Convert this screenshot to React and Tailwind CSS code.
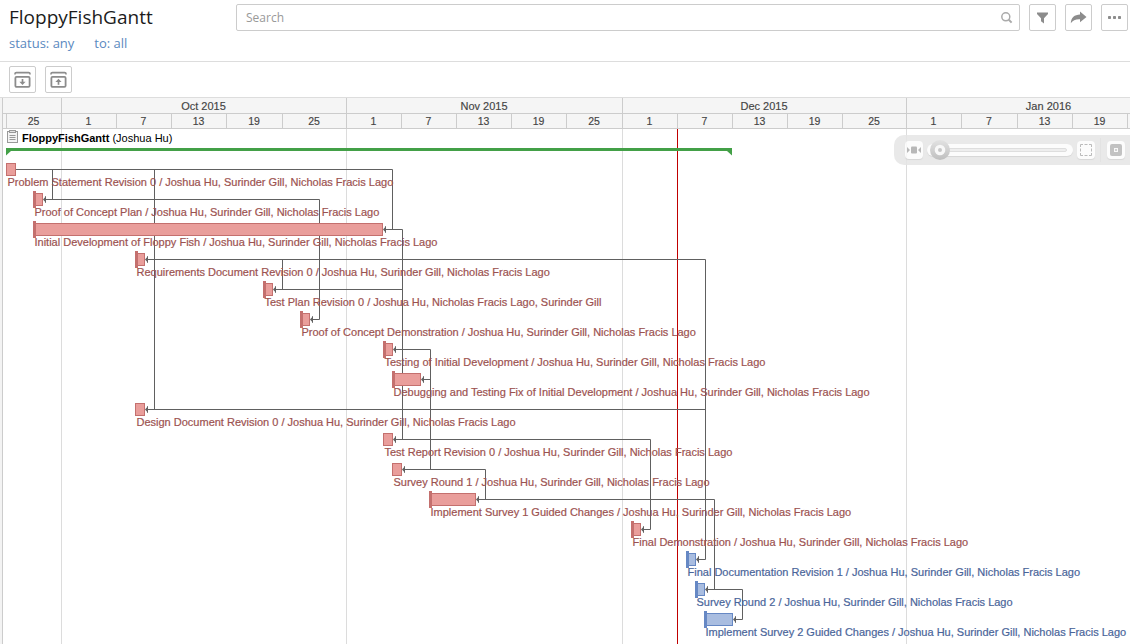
import React from "react";

const NAMES = "Joshua Hu, Surinder Gill, Nicholas Fracis Lago";

const TASKS = [
  { x: 6, w: 10, name: "Problem Statement Revision 0" },
  { x: 33, w: 10, tick: true, name: "Proof of Concept Plan" },
  { x: 33, w: 350, tick: true, name: "Initial Development of Floppy Fish" },
  { x: 135, w: 10, tick: true, name: "Requirements Document Revision 0" },
  { x: 263, w: 10, tick: true, name: "Test Plan Revision 0", people: "Joshua Hu, Nicholas Fracis Lago, Surinder Gill" },
  { x: 300, w: 10, tick: true, name: "Proof of Concept Demonstration" },
  { x: 383, w: 10, tick: true, name: "Testing of Initial Development" },
  { x: 392, w: 29, tick: true, name: "Debugging and Testing Fix of Initial Development" },
  { x: 135, w: 10, name: "Design Document Revision 0" },
  { x: 383, w: 10, name: "Test Report Revision 0" },
  { x: 392, w: 10, name: "Survey Round 1" },
  { x: 429, w: 47, tick: true, name: "Implement Survey 1 Guided Changes" },
  { x: 631, w: 10, tick: true, name: "Final Demonstration" },
  { x: 686, w: 10, tick: true, blue: true, name: "Final Documentation Revision 1" },
  { x: 695, w: 10, tick: true, blue: true, name: "Survey Round 2" },
  { x: 704, w: 29, tick: true, blue: true, name: "Implement Survey 2 Guided Changes" },
];

const MONTHS = [
  { w: 59, t: "" },
  { w: 285, t: "Oct 2015" },
  { w: 276, t: "Nov 2015" },
  { w: 284, t: "Dec 2015" },
  { w: 285, t: "Jan 2016" },
];

const DAYS = [
  [4, ""], [55, "25"], [55, "1"], [55, "7"], [55, "13"], [56, "19"], [64, "25"],
  [55, "1"], [55, "7"], [55, "13"], [55, "19"], [56, "25"],
  [55, "1"], [55, "7"], [55, "13"], [55, "19"], [64, "25"],
  [55, "1"], [56, "7"], [55, "13"], [55, "19"], [55, ""],
];

// Dependency lines, in page-wide coordinates
const LINKS = [
  "M16 169.5H392.5V229.5",
  "M386 229.5H402.5V439.5",
  "M52.5 169.5V199.5",
  "M45 199.5H319.5V319.5H312",
  "M154.5 169.5V409.5",
  "M147 409.5H705.5",
  "M147 259.5H705.5V559.5H698",
  "M282.5 259.5V289.5",
  "M275 289.5H402.5",
  "M395 439.5H650.5V529.5H643",
  "M395 349.5H430.5V469.5",
  "M423 379.5H430.5",
  "M404 469.5H485.5V499.5",
  "M478 499.5H714.5V589.5",
  "M707 589.5H742.5V619.5H735",
];

function ToolButton({ children }) {
  return (
    <button className="flex h-[27px] w-[27px] shrink-0 items-center justify-center rounded-[2px] border border-[#cccccc] bg-white">
      {children}
    </button>
  );
}

function BoxIcon({ up }) {
  return (
    <svg width="17" height="17" viewBox="0 0 17 17" fill="none" stroke="#8c8c8c">
      <path d="M1 3.4V2.8Q1 1.6 2.4 1.6H14.6Q16 1.6 16 2.8V3.4" strokeWidth="1.6" />
      <rect x="1.4" y="5.9" width="14.2" height="10" rx="1.2" strokeWidth="1.8" />
      {up ? (
        <path d="M5.4 11L8.5 7.8L11.6 11Z" stroke="none" fill="#8c8c8c" />
      ) : (
        <path d="M5.4 10.8L8.5 14L11.6 10.8Z" stroke="none" fill="#8c8c8c" />
      )}
      <path d={up ? "M8.5 10.5V13.8" : "M8.5 8V11"} strokeWidth="1.7" />
    </svg>
  );
}

function Header() {
  return (
    <header className="flex h-[62px] shrink-0 border-b border-[#dddddd]">
      <div className="w-[236px] shrink-0 pl-[9px] pt-[5px]">
        <h1 className="text-[19px] leading-[25px] text-[#1c1c1c]">FloppyFishGantt</h1>
        <div className="flex gap-[20px] pt-[4px] text-[13px] leading-[18px] text-[#5a89c0]">
          <a>status: any</a>
          <a>to: all</a>
        </div>
      </div>
      <div className="flex w-[892px] shrink-0 items-start pt-[4px]">
        <div className="mr-[9px] flex h-[27px] flex-1 items-center justify-between rounded-[2px] border border-[#cccccc] pl-[9px] pr-[6px]">
          <span className="text-[12px] text-[#999999]">Search</span>
          <svg width="13" height="13" viewBox="0 0 13 13" fill="none" stroke="#aaaaaa">
            <circle cx="5.8" cy="5.8" r="4" strokeWidth="1.5" />
            <path d="M8.8 8.8L11.6 11.6" strokeWidth="2" />
          </svg>
        </div>
        <div className="flex gap-[9px]">
          <ToolButton>
            <svg width="13" height="12" viewBox="0 0 13 12" fill="#8c8c8c">
              <path d="M1 0.5H12V2L8 6.3V11.5L5 9.3V6.3L1 2Z" />
            </svg>
          </ToolButton>
          <ToolButton>
            <svg width="17" height="13" viewBox="0 0 17 13" fill="#8c8c8c">
              <path d="M0.8 12.3C1 6.6 4.6 3.5 10 3.4V0.6L16.5 6L10 11.2V8.2C5.7 8 2.8 9.2 0.8 12.3Z" />
            </svg>
          </ToolButton>
          <ToolButton>
            <svg width="13" height="4" viewBox="0 0 13 4" fill="#8c8c8c">
              <rect x="0" y="0" width="3" height="3" rx=".7" />
              <rect x="5" y="0" width="3" height="3" rx=".7" />
              <rect x="10" y="0" width="3" height="3" rx=".7" />
            </svg>
          </ToolButton>
        </div>
      </div>
    </header>
  );
}

function TimeScale() {
  return (
    <div className="ml-[2px] w-[1128px] overflow-hidden border-l border-[#cccccc] bg-[#f5f5f5] text-[#444444] [-webkit-text-stroke:0.15px]">
      <div className="flex h-[16px] border-b border-[#cccccc]">
        {MONTHS.map((m, i) => (
          <div
            key={i}
            className="shrink-0 border-r border-[#cccccc] pr-px text-center text-[11px] leading-[17px]"
            style={{ width: m.w }}
          >
            {m.t}
          </div>
        ))}
      </div>
      <div className="flex h-[15px] border-b border-[#cccccc]">
        {DAYS.map(([w, t], i) => (
          <div
            key={i}
            className="shrink-0 border-r border-[#cccccc] pr-px text-center text-[10.5px] leading-[15px]"
            style={{ width: w }}
          >
            {t}
          </div>
        ))}
      </div>
    </div>
  );
}

function TaskRow({ task }) {
  const { x, w, tick, blue, name, people = NAMES } = task;
  return (
    <div className="h-[30px] pt-[2px]" style={{ paddingLeft: x }}>
      <div className="flex h-[17px] items-center" style={{ width: w }}>
        {tick && <div className={`h-[17px] w-[3px] shrink-0 ${blue ? "bg-[#6688c4]" : "bg-[#c4706e]"}`} />}
        <div
          className={`h-[13px] flex-1 border ${tick ? "border-l-0" : ""} ${
            blue ? "border-[#6688c4] bg-[#a9bde0]" : "border-[#c4706e] bg-[#e99e9b]"
          }`}
        />
      </div>
      <div
        className={`-mt-[3px] ml-[1.5px] whitespace-nowrap text-[11px] leading-[14px] [-webkit-text-stroke:0.2px] ${
          blue ? "text-[#4a659a]" : "text-[#9c5250]"
        }`}
      >
        {name} / {people}
      </div>
    </div>
  );
}

function ZoomBar() {
  const btn = "flex h-[18px] w-[18px] shrink-0 items-center justify-center rounded-[4px] bg-[#fcfcfc] shadow-[0_1px_1px_#d0d0d0]";
  return (
    <div className="absolute right-0 top-[6px] flex h-[30px] w-[236px] items-center rounded-l-[10px] bg-[#e6e6e6] pl-[11px] opacity-85">
      <div className={btn}>
        <svg width="16" height="8" viewBox="0 0 16 8" fill="#acacac">
          <path d="M1 1L4 4L1 7ZM15 1L12 4L15 7Z" />
          <rect x="5" y="0.5" width="6" height="7" rx="1" />
        </svg>
      </div>
      <div className="ml-[4px] flex h-[12px] w-[146px] items-center rounded-full bg-[#fcfcfc] px-[6px] shadow-[0_1px_1px_#d0d0d0]">
        <div className="h-[4px] flex-1 rounded-full border border-[#d9d9d9] bg-[#ececec]" />
      </div>
      <svg className="absolute left-[35px] top-[4px]" width="22" height="22" viewBox="0 0 22 22">
        <defs>
          <linearGradient id="knob" x1="0" y1="0" x2="0" y2="1">
            <stop offset="0" stopColor="#dedede" />
            <stop offset="1" stopColor="#b4b4b4" />
          </linearGradient>
        </defs>
        <circle cx="11" cy="11" r="10" fill="url(#knob)" />
        <circle cx="11" cy="11" r="5.3" fill="#f7f7f7" />
        <circle cx="11" cy="11" r="2" fill="#bebebe" />
      </svg>
      <div className={`${btn} ml-[4px]`}>
        <svg width="12" height="12" viewBox="0 0 12 12" fill="none" stroke="#b0b0b0">
          <path d="M0.5 3V0.5H3M9 0.5H11.5V3M11.5 9V11.5H9M3 11.5H0.5V9M4.5 0.5H7.5M4.5 11.5H7.5M0.5 4.5V7.5M11.5 4.5V7.5" />
        </svg>
      </div>
      <div className="ml-[5px] mr-[6px] h-[24px] w-px bg-[#dfdfdf]" />
      <div className={btn}>
        <svg width="12" height="12" viewBox="0 0 12 12">
          <rect width="12" height="12" rx="2" fill="#b8b8b8" />
          <rect x="4.5" y="4.5" width="3" height="3" fill="#c8c8c8" stroke="#f7f7f7" />
        </svg>
      </div>
    </div>
  );
}

export default function App() {
  return (
    <div className="flex h-[644px] w-[1130px] flex-col overflow-hidden bg-white font-['Open_Sans',sans-serif]">
      <Header />
      <div className="flex h-[35px] shrink-0 gap-[9px] pl-[9px] pt-[4px]">
        <ToolButton><BoxIcon /></ToolButton>
        <ToolButton><BoxIcon up /></ToolButton>
      </div>
      <div className="flex flex-1 flex-col overflow-hidden border-t border-[#dddddd] bg-[#f3f3f3] font-['Liberation_Sans',sans-serif]">
        <TimeScale />
        <div className="relative flex-1">
          <div className="absolute inset-y-0 left-[2px] right-0 border-l border-[#cccccc] bg-white" />
          <svg className="absolute left-0 top-0" width="1130" height="515" viewBox="0 129 1130 515" fill="none">
            <path d="M61.5 129V644M346.5 129V644M622.5 129V644M906.5 129V644" stroke="#dcdcdc" />
            <path d="M677.5 129V644" stroke="#c00000" />
            <path d={LINKS.join("")} stroke="#606060" />
            {TASKS.map((t, i) =>
              i === 0 ? null : (
                <g key={i} transform={`translate(${t.x + t.w} ${169 + 30 * i})`}>
                  <path d="M2.5 -3V4" stroke="#909090" />
                  <path d="M0 0.5L3 -2.8V3.8Z" fill="#606060" />
                </g>
              )
            )}
            <path d="M6 148H732V155.5L727 151H11L6 155.5Z" fill="#43a047" />
          </svg>
          <div className="relative">
            <div className="flex h-[30px] items-start pl-[7px] pt-[1px]">
              <svg width="11" height="13" viewBox="0 0 11 13" fill="none" stroke="#999999">
                <rect x="0.5" y="1.5" width="10" height="11" fill="#f4f4f4" />
                <rect x="2.5" y="0.5" width="6" height="2" fill="#e2e2e2" />
                <path d="M2.5 5.5H8.5M2.5 7.5H8.5M2.5 9.5H8.5" />
              </svg>
              <div className="ml-[4px] mt-[1px] whitespace-nowrap text-[11px] leading-[14px] text-black">
                <b>FloppyFishGantt</b> (Joshua Hu)
              </div>
            </div>
            {TASKS.map((t) => (
              <TaskRow key={t.name} task={t} />
            ))}
          </div>
          <ZoomBar />
        </div>
      </div>
    </div>
  );
}
